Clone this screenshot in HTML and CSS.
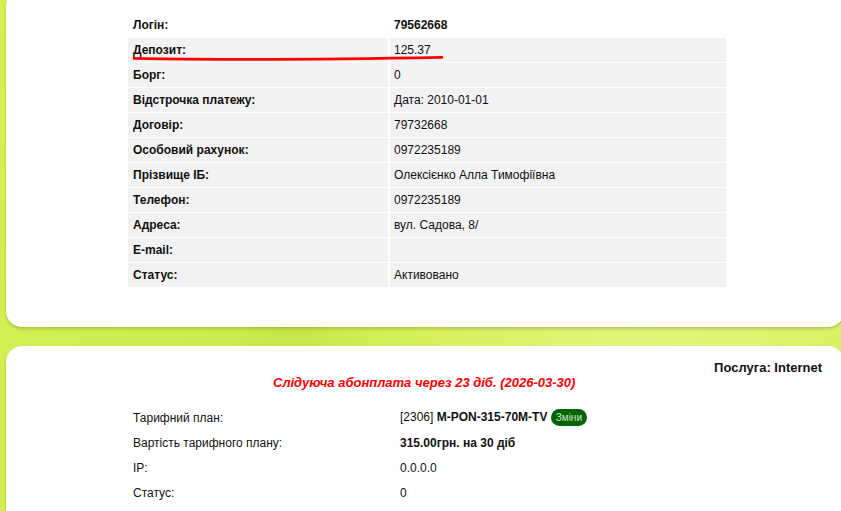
FILE: index.html
```html
<!DOCTYPE html>
<html lang="uk">
<head>
<meta charset="utf-8">
<title>Кабінет абонента</title>
<link rel="stylesheet" href="styles.css">
</head>
<body>
<div class="page">
  <section class="card card-user">
    <div class="info-wrap">
      <table class="info">
        <tr class="head"><th>Логін:</th><td><b>79562668</b></td></tr>
        <tr><th>Депозит:</th><td>125.37</td></tr>
        <tr><th>Борг:</th><td>0</td></tr>
        <tr><th>Відстрочка платежу:</th><td>Дата: 2010-01-01</td></tr>
        <tr><th>Договір:</th><td>79732668</td></tr>
        <tr><th>Особовий рахунок:</th><td>0972235189</td></tr>
        <tr><th>Прізвище ІБ:</th><td>Олексієнко Алла Тимофіївна</td></tr>
        <tr><th>Телефон:</th><td>0972235189</td></tr>
        <tr><th>Адреса:</th><td>вул. Садова, 8/</td></tr>
        <tr><th>E-mail:</th><td></td></tr>
        <tr><th>Статус:</th><td>Активовано</td></tr>
      </table>
      <svg class="mark" width="320" height="8" viewBox="0 0 320 8">
        <path d="M2 4.4 C 80 5.8, 200 5.4, 310 3.4" fill="none" stroke="#f00" stroke-width="2.6" stroke-linecap="round"/>
      </svg>
    </div>
  </section>

  <section class="card card-service">
    <div class="service-title">Послуга: Internet</div>
    <div class="next-pay">Слідуюча абонплата через 23 діб. (2026-03-30)</div>
    <table class="service">
      <tr><td>Тарифний план:</td><td>[2306] <b>M-PON-315-70M-TV</b> <span class="badge">Зміни</span></td></tr>
      <tr><td>Вартість тарифного плану:</td><td><b>315.00грн. на 30 діб</b></td></tr>
      <tr><td>IP:</td><td>0.0.0.0</td></tr>
      <tr><td>Статус:</td><td>0</td></tr>
    </table>
  </section>
</div>
</body>
</html>
```

FILE: styles.css
```css
html, body {
  margin: 0;
  padding: 0;
  overflow: hidden;
}

body {
  font-family: "Liberation Sans", Arial, sans-serif;
  font-size: 12px;
  color: #111;
  background: linear-gradient(100deg, #d4f052 0%, #cdec4c 30%, #c6e748 38%, #d3ef55 48%, #dbf26a 62%, #e2f47a 75%, #d9f163 100%);
  height: 511px;
}

.page {
  display: flex;
  flex-direction: column;
  gap: 19px;
  padding-left: 6px;
  margin-top: -10px;
  margin-right: -3px;
}

.card {
  background: #fff;
  border-radius: 16px;
  box-shadow: 0 2px 3px rgba(0, 0, 0, 0.18);
}

.card-user {
  padding: 22px 0 39px 122px;
}

.info-wrap {
  position: relative;
  width: 598px;
}

.info {
  width: 598px;
  border-collapse: collapse;
  font-size: 12px;
}

.info th,
.info td {
  height: 14px;
  padding: 5px 5px;
  text-align: left;
  vertical-align: middle;
  background: #f2f2f2;
  border-top: 1px solid #fff;
  border-bottom: 1px solid #fff;
  line-height: 14px;
}

.info th {
  width: 250px;
  font-weight: bold;
  border-right: 2px solid #fff;
}

.info td {
  padding-left: 4px;
}

.info tr.head th,
.info tr.head td {
  background: #fff;
}

.mark {
  position: absolute;
  left: 4px;
  top: 42px;
}

.card-service {
  padding: 14px 22px 20px 122px;
  min-height: 200px;
}

.service-title {
  text-align: right;
  font-weight: bold;
  font-size: 13px;
  line-height: 16px;
}

.next-pay {
  color: #f00;
  font-weight: bold;
  font-style: italic;
  font-size: 13px;
  line-height: 16px;
  margin-left: 145px;
  margin-top: -1px;
}

.service {
  margin-top: 14px;
  border-collapse: collapse;
  font-size: 12px;
}

.service td {
  height: 25px;
  padding: 0 5px;
  vertical-align: middle;
}

.service td:first-child {
  width: 257px;
}

.badge {
  display: inline-block;
  background: #006400;
  color: #cfe8c8;
  font-size: 10px;
  line-height: 17px;
  padding: 0 5px;
  border-radius: 9px;
  vertical-align: middle;
}
```
